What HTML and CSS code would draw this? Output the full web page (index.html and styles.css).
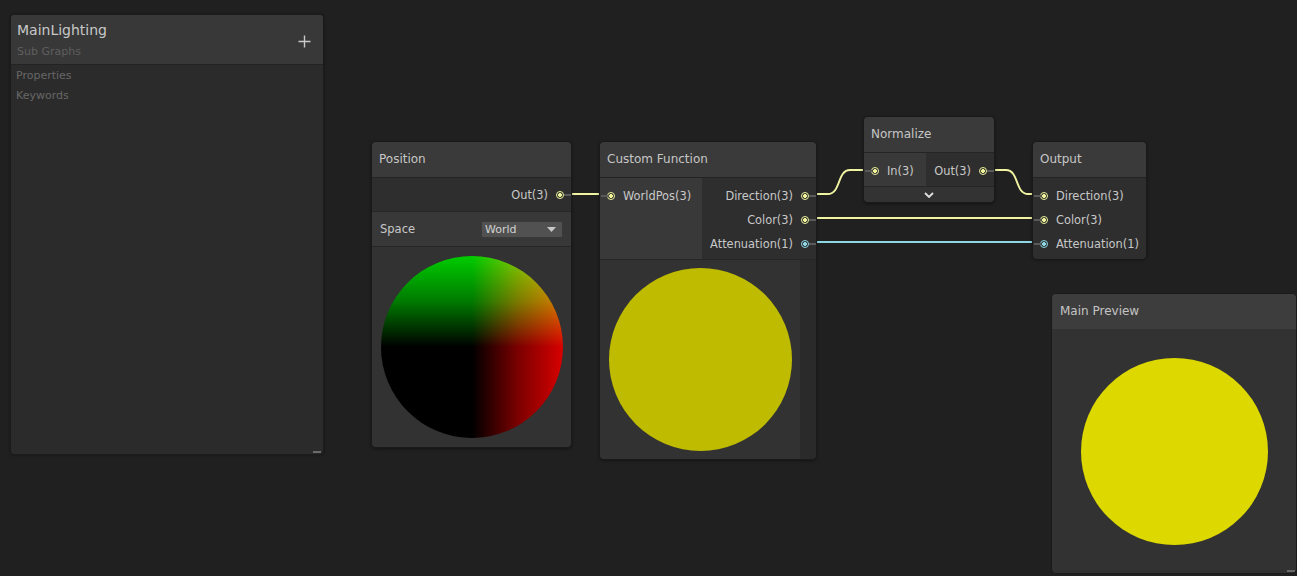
FILE: index.html
```html
<!DOCTYPE html>
<html>
<head>
<meta charset="utf-8">
<link rel="stylesheet" href="styles.css">
</head>
<body>
<div class="canvas">
  <svg class="edges" width="1297" height="576" viewBox="0 0 1297 576">
    <g fill="none" stroke-width="2">
      <path d="M571 194 H599" stroke="#f0f3a0"/>
      <path d="M816 194 H828 C841 194 837 170 850 170 H863" stroke="#f0f3a0"/>
      <path d="M994 170 H1006 C1019 170 1015 194 1028 194 H1032" stroke="#f0f3a0"/>
      <path d="M816 218 H1032" stroke="#f0f3a0"/>
      <path d="M816 242 H1032" stroke="#8ed8e6"/>
    </g>
  </svg>

  <div class="blackboard">
    <div class="bb-header">
      <div class="bb-titles">
        <div class="bb-title">MainLighting</div>
        <div class="bb-sub">Sub Graphs</div>
      </div>
      <svg class="bb-plus" width="13" height="13" viewBox="0 0 13 13"><path d="M6.5 0.5 V12.5 M0.5 6.5 H12.5" stroke="#c8c8c8" stroke-width="1.4"/></svg>
    </div>
    <div class="bb-body">
      <div class="bb-item">Properties</div>
      <div class="bb-item">Keywords</div>
    </div>
    <div class="resize-mark"></div>
  </div>

  <div class="node node-position">
    <div class="node-title">Position</div>
    <div class="outputs single">
      <div class="row out"><span>Out(3)</span><i class="port y"></i></div>
    </div>
    <div class="control-row">
      <span>Space</span>
      <div class="dropdown"><span>World</span><svg width="9" height="5" viewBox="0 0 9 5"><path d="M0 0 H9 L4.5 5 Z" fill="#c8c8c8"/></svg></div>
    </div>
    <div class="preview">
      <div class="sphere sphere-pos"></div>
    </div>
  </div>

  <div class="node node-custom">
    <div class="node-title">Custom Function</div>
    <div class="ports">
      <div class="inputs cf-in">
        <div class="row in"><i class="port y"></i><span>WorldPos(3)</span></div>
      </div>
      <div class="outputs">
        <div class="row out"><span>Direction(3)</span><i class="port y"></i></div>
        <div class="row out"><span>Color(3)</span><i class="port y"></i></div>
        <div class="row out"><span>Attenuation(1)</span><i class="port b"></i></div>
      </div>
    </div>
    <div class="cf-preview-wrap">
      <div class="preview cf-preview">
        <div class="sphere sphere-cf"></div>
      </div>
      <div class="cf-strip"></div>
    </div>
  </div>

  <div class="node node-normalize">
    <div class="node-title">Normalize</div>
    <div class="ports norm-ports">
      <div class="inputs norm-in">
        <div class="row in"><i class="port y"></i><span>In(3)</span></div>
      </div>
      <div class="outputs">
        <div class="row out"><span>Out(3)</span><i class="port y"></i></div>
      </div>
    </div>
    <div class="collapse-bar">
      <svg width="10" height="6" viewBox="0 0 10 6"><path d="M1 1 L5 5 L9 1" fill="none" stroke="#e0e0e0" stroke-width="1.8"/></svg>
    </div>
  </div>

  <div class="node node-output">
    <div class="node-title">Output</div>
    <div class="inputs out-node-in">
      <div class="row in"><i class="port y"></i><span>Direction(3)</span></div>
      <div class="row in"><i class="port y"></i><span>Color(3)</span></div>
      <div class="row in"><i class="port b"></i><span>Attenuation(1)</span></div>
    </div>
  </div>

  <div class="main-preview">
    <div class="mp-title">Main Preview</div>
    <div class="mp-body">
      <div class="sphere sphere-main"></div>
    </div>
    <div class="resize-mark mp-resize"></div>
  </div>
</div>
</body>
</html>
```

FILE: styles.css
```css
* { box-sizing: border-box; }
html, body {
  margin: 0;
  padding: 0;
  background: #202020;
  overflow: hidden;
}
body {
  font-family: "DejaVu Sans", Verdana, sans-serif;
  color: #c4c4c4;
}
.canvas {
  position: relative;
  width: 1297px;
  height: 576px;
}
.edges {
  position: absolute;
  left: 0;
  top: 0;
  z-index: 0;
}

/* Blackboard */
.blackboard {
  position: absolute;
  left: 10px;
  top: 14px;
  width: 314px;
  height: 441px;
  background: #2b2b2b;
  border: 1px solid #1b1b1b;
  border-radius: 4px;
  display: flex;
  flex-direction: column;
  z-index: 1;
  box-shadow: 0 0 3px rgba(0,0,0,0.35);
}
.bb-header {
  height: 50px;
  flex: none;
  background: #383838;
  border-bottom: 1px solid #232323;
  border-radius: 3px 3px 0 0;
  display: flex;
  justify-content: space-between;
  align-items: flex-start;
  padding: 6px 12px 0 6px;
}
.bb-title {
  font-size: 14px;
  color: #c8c8c8;
  line-height: 18px;
}
.bb-sub {
  font-size: 11px;
  color: #5e5e5e;
  line-height: 16px;
  margin-top: 5px;
}
.bb-plus {
  margin-top: 14px;
}
.bb-body {
  padding: 1px 5px 0;
}
.bb-item {
  font-size: 11px;
  color: #676767;
  line-height: 20px;
}
.resize-mark {
  position: absolute;
  right: 2px;
  bottom: 1px;
  width: 8px;
  height: 2px;
  background: #6a6a6a;
}

/* Nodes */
.node {
  position: absolute;
  z-index: 1;
  background: #2e2e2e;
  border: 1px solid #1a1a1a;
  border-radius: 5px;
  display: flex;
  flex-direction: column;
  box-shadow: 0 1px 3px rgba(0,0,0,0.4);
}
.node-title {
  height: 36px;
  flex: none;
  background: #3a3a3a;
  border-bottom: 1px solid #242424;
  border-radius: 4px 4px 0 0;
  font-size: 12px;
  line-height: 34px;
  padding-left: 7px;
  color: #c6c6c6;
}
.node-position { left: 371px; top: 141px; width: 201px; height: 307px; }
.node-custom { left: 599px; top: 141px; width: 218px; height: 319px; }
.node-normalize { left: 863px; top: 116px; width: 132px; height: 87px; }
.node-output { left: 1032px; top: 141px; width: 115px; height: 118px; }

.ports {
  display: flex;
  flex: none;
}
.inputs {
  background: #393939;
  padding: 6px 0 3px;
}
.outputs {
  flex: 1;
  background: #2e2e2e;
  padding: 6px 0 3px;
}
.outputs.single {
  flex: none;
  padding: 5px 0 4px;
  border-bottom: 1px solid #262626;
}
.cf-in { width: 102px; }
.norm-ports .inputs, .norm-ports .outputs { padding: 6px 0 3px; }
.norm-in { width: 62px; }
.out-node-in { flex: 1; background: #2e2e2e; border-radius: 0 0 4px 4px; }

.row {
  height: 24px;
  display: flex;
  align-items: center;
  gap: 8px;
  font-size: 11.4px;
  color: #c8c8c8;
  white-space: nowrap;
}
.row.out {
  justify-content: flex-end;
  padding-right: 7px;
}
.row.in {
  padding-left: 7px;
}
.port {
  position: relative;
  width: 8px;
  height: 8px;
  border-radius: 50%;
  flex: none;
}
.port.y {
  border: 1.5px solid #eef39c;
  background: radial-gradient(circle, #eef39c 0 1.6px, #2a2a2a 2.2px);
}
.port.b {
  border: 1.5px solid #8ed8e6;
  background: radial-gradient(circle, #8ed8e6 0 1.6px, #2a2a2a 2.2px);
}
.row.out .port::after {
  content: "";
  position: absolute;
  left: 6.5px;
  top: 2px;
  width: 7px;
  height: 2px;
  background: #5a5a5a;
}
.row.in .port::before {
  content: "";
  position: absolute;
  right: 6.5px;
  top: 2px;
  width: 7px;
  height: 2px;
  background: #5a5a5a;
}

.control-row {
  height: 35px;
  flex: none;
  background: #383838;
  border-bottom: 1px solid #262626;
  display: flex;
  align-items: center;
  justify-content: space-between;
  padding: 0 8px 0 8px;
  font-size: 11.5px;
  color: #c8c8c8;
}
.dropdown {
  width: 82px;
  height: 17px;
  background: #515151;
  border: 1px solid #3a3a3a;
  border-radius: 2px;
  display: flex;
  align-items: center;
  justify-content: space-between;
  padding: 0 6px 0 3px;
  font-size: 11px;
  color: #d2d2d2;
}

.preview {
  flex: 1;
  background: #323232;
  display: flex;
  align-items: center;
  justify-content: center;
  border-radius: 0 0 4px 4px;
}
.sphere {
  border-radius: 50%;
  flex: none;
}
.sphere-pos {
  width: 182px;
  height: 182px;
  background:
    linear-gradient(to right, #000 50%, #7a0000 75%, #d80000 100%),
    linear-gradient(to top, #000 50%, #007a00 75%, #00cc00 100%);
  background-blend-mode: screen;
}
.cf-preview-wrap {
  flex: 1;
  display: flex;
  border-top: 1px solid #262626;
}
.cf-preview {
  width: 200px;
  flex: none;
  border-radius: 0 0 0 4px;
}
.cf-strip {
  flex: 1;
  background: #2a2a2a;
  border-radius: 0 0 4px 0;
}
.sphere-cf {
  width: 183px;
  height: 183px;
  background: #bfbb00;
}

.collapse-bar {
  flex: 1;
  background: #333333;
  border-top: 1px solid #262626;
  border-radius: 0 0 4px 4px;
  display: flex;
  align-items: center;
  justify-content: center;
}

/* Main preview */
.main-preview {
  position: absolute;
  left: 1051px;
  top: 293px;
  width: 246px;
  height: 281px;
  z-index: 1;
  background: #323232;
  border: 1px solid #1a1a1a;
  border-radius: 5px;
  display: flex;
  flex-direction: column;
}
.mp-title {
  height: 35px;
  flex: none;
  background: #3d3d3d;
  border-radius: 4px 4px 0 0;
  font-size: 12px;
  line-height: 34px;
  padding-left: 8px;
  color: #c4c4c4;
}
.mp-body {
  flex: 1;
  display: flex;
  align-items: center;
  justify-content: center;
}
.sphere-main {
  width: 187px;
  height: 187px;
  background: #dcd800;
}
.mp-resize {
  right: 1px;
  bottom: 1px;
}
```
